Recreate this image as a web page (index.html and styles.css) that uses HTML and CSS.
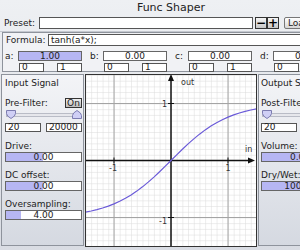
FILE: index.html
```html
<!DOCTYPE html>
<html lang="en">
<head>
    <meta charset="UTF-8">
    <title>Func Shaper</title>
    <link rel="stylesheet" href="styles.css">
</head>
<body>
<div class="app">
    <div class="title">Func Shaper</div>

    <div class="preset-row">
        <span class="preset-label">Preset:</span>
        <div class="preset-input"></div>
        <div class="sq-btn first">&minus;</div>
        <div class="sq-btn">+</div>
        <div class="load-btn">Load</div>
    </div>

    <div class="formula-panel">
        <div class="formula-row">
            <span class="formula-label">Formula:</span>
            <div class="formula-input">tanh(a*x);</div>
        </div>
        <div class="params">
            <div class="param">
                <span class="param-label">a:</span>
                <div class="param-col">
                    <div class="bar" style="--v:100%">1.00</div>
                    <div class="range"><div class="box">0</div><div class="box">1</div></div>
                </div>
            </div>
            <div class="param">
                <span class="param-label">b:</span>
                <div class="param-col">
                    <div class="bar" style="--v:0%">0.00</div>
                    <div class="range"><div class="box">0</div><div class="box">1</div></div>
                </div>
            </div>
            <div class="param">
                <span class="param-label">c:</span>
                <div class="param-col">
                    <div class="bar" style="--v:0%">0.00</div>
                    <div class="range"><div class="box">0</div><div class="box">1</div></div>
                </div>
            </div>
            <div class="param">
                <span class="param-label">d:</span>
                <div class="param-col">
                    <div class="bar" style="--v:0%">0.00</div>
                    <div class="range"><div class="box">0</div><div class="box">1</div></div>
                </div>
            </div>
        </div>
    </div>

    <div class="main">
        <!-- input side -->
        <div class="side">
            <div class="side-title">Input Signal</div>
            <div class="filter-row">
                <span>Pre-Filter:</span>
                <div class="on-btn">On</div>
            </div>
            <svg class="slider" width="77" height="9" viewBox="0 0 77 9">
                <rect x="1.5" y="3.5" width="74" height="3" fill="#e6e7ec" stroke="#b9bcc6"/>
                <path d="M1.5 .5H10.5V3.5Q10.5 6 6 8.5Q1.5 6 1.5 3.5Z" fill="#cfcff5" stroke="#7c7cb0"/>
                <path d="M67.5 8.5V5.5Q67.5 3 72 .5Q76.5 3 76.5 5.5V8.5Z" fill="#cfcff5" stroke="#7c7cb0"/>
            </svg>
            <div class="range2"><div class="box wide">20</div><div class="box wide">20000</div></div>
            <div class="group">
                <div class="group-label">Drive:</div>
                <div class="bar" style="--v:50%">0.00</div>
            </div>
            <div class="group">
                <div class="group-label">DC offset:</div>
                <div class="bar" style="--v:50%">0.00</div>
            </div>
            <div class="group">
                <div class="group-label">Oversampling:</div>
                <div class="bar" style="--v:20%">4.00</div>
            </div>
        </div>

        <!-- transfer curve -->
        <div class="graph">
            <svg width="172" height="173" viewBox="0 0 172 173">
                <defs>
                    <pattern id="minor" x="86" y="86.5" width="5.7" height="5.7" patternUnits="userSpaceOnUse">
                        <path d="M0 0H5.7M0 0V5.7" stroke="#dadada" fill="none"/>
                    </pattern>
                </defs>
                <rect width="172" height="173" fill="#fff"/>
                <rect width="172" height="173" fill="url(#minor)"/>
                <path d="M29 0V173M143 0V173M0 29.5H172M0 143.5H172" stroke="#a4a4a4"/>
                <path d="M86 3V173M0 86.5H166" stroke="#111" stroke-width="1.5"/>
                <path d="M86 0L83 7H89Z M170 86.5L163 83.5V89.5Z" fill="#111"/>
                <path d="M83 29.5H89M83 143.5H89M29 83.5V89.5M143 83.5V89.5" stroke="#111"/>
                <polyline fill="none" stroke="#6a5ad8" stroke-width="1.2"
                    points="0.5,138.09 6.2,136.97 11.9,135.62 17.6,134.02 23.3,132.13 29,129.91 34.7,127.33 40.4,124.35 46.1,120.95 51.8,117.11 57.5,112.84 63.2,108.15 68.9,103.10 74.6,97.75 80.3,92.18 86,86.5 91.7,80.82 97.4,75.25 103.1,69.90 108.8,64.85 114.5,60.16 120.2,55.89 125.9,52.05 131.6,48.65 137.3,45.67 143,43.09 148.7,40.87 154.4,38.98 160.1,37.38 165.8,36.03 171.5,34.91"/>
                <g class="tick">
                    <text x="96" y="11">out</text>
                    <text x="160" y="78">in</text>
                    <text x="82" y="33" text-anchor="end">1</text>
                    <text x="82" y="150" text-anchor="end">-1</text>
                    <text x="28" y="97" text-anchor="middle">-1</text>
                    <text x="143" y="97" text-anchor="middle">1</text>
                </g>
                <rect x=".5" y=".5" width="171" height="172" fill="none" stroke="#333"/>
            </svg>
        </div>

        <!-- output side -->
        <div class="side out">
            <div class="side-title">Output Signal</div>
            <div class="filter-row">
                <span>Post-Filter:</span>
                <div class="on-btn">On</div>
            </div>
            <svg class="slider" width="77" height="9" viewBox="0 0 77 9">
                <rect x="1.5" y="3.5" width="74" height="3" fill="#e6e7ec" stroke="#b9bcc6"/>
                <path d="M1.5 .5H10.5V3.5Q10.5 6 6 8.5Q1.5 6 1.5 3.5Z" fill="#cfcff5" stroke="#7c7cb0"/>
                <path d="M67.5 8.5V5.5Q67.5 3 72 .5Q76.5 3 76.5 5.5V8.5Z" fill="#cfcff5" stroke="#7c7cb0"/>
            </svg>
            <div class="range2"><div class="box wide">20</div><div class="box wide">20000</div></div>
            <div class="group">
                <div class="group-label">Volume:</div>
                <div class="bar" style="--v:100%">0.00</div>
            </div>
            <div class="group">
                <div class="group-label">Dry/Wet:</div>
                <div class="bar" style="--v:100%">100.00</div>
            </div>
        </div>
    </div>
</div>
</body>
</html>
```

FILE: styles.css
```css
* {
    box-sizing: border-box;
}
body {
    margin: 0;
    overflow: hidden;
    background-color: #dcdfe5;
    font-family: "DejaVu Sans", Verdana, sans-serif;
    font-size: 9px;
    color: #222;
}
.app {
    width: 342px;
    height: 250px;
    background: linear-gradient(#eef0f3, #d9dce3);
}
.title {
    height: 15px;
    line-height: 15px;
    text-align: center;
    font-size: 11px;
    color: #222;
}

/* preset row */
.preset-row {
    display: flex;
    align-items: center;
    height: 17px;
    padding-left: 4px;
    border-bottom: 1px solid #c4c8cf;
}
.preset-label {
    width: 35px;
}
.preset-input {
    width: 214px;
    height: 12px;
    border: 1px solid #555;
    background-color: #fff;
}
.sq-btn {
    width: 12px;
    height: 12px;
    border: 1px solid #333;
    background: linear-gradient(#f6f6f6, #c6c6c6);
    display: flex;
    align-items: center;
    justify-content: center;
    font-weight: bold;
    font-size: 12px;
    line-height: 1;
    color: #000;
}
.sq-btn.first {
    margin-left: 2px;
    margin-right: 0;
}
.load-btn {
    margin-left: 5px;
    height: 12px;
    padding: 0 3px;
    border: 1px solid #777;
    border-radius: 2px;
    background: linear-gradient(#fff, #d6d6d6);
    line-height: 10px;
}

/* formula + params */
.formula-panel {
    height: 40px;
    margin-left: 2px;
    padding: 1px 0 1px 2px;
    border: 1px solid #8e939c;
    border-right: none;
    background-color: #f1f2f5;
}
.formula-row {
    display: flex;
    align-items: center;
    height: 12px;
    padding-left: 1px;
}
.formula-label {
    width: 42px;
}
.formula-input {
    flex: 1;
    height: 12px;
    padding-left: 2px;
    border: 1px solid #555;
    background-color: #fff;
    line-height: 10px;
}
.params {
    display: flex;
    margin-top: 5px;
}
.param {
    display: flex;
    flex-shrink: 0;
    width: 85px;
}
.param-label {
    width: 13px;
    line-height: 10px;
}
.param-col {
    width: 64px;
}
.bar {
    height: 10px;
    border: 1px solid #666;
    background: linear-gradient(to right, #b6b6f3 var(--v), #fff var(--v));
    text-align: center;
    line-height: 8px;
    white-space: nowrap;
    overflow: hidden;
}
.range {
    display: flex;
    justify-content: space-between;
    margin-top: 2px;
    padding-left: 1px;
}
.box {
    width: 25px;
    height: 9px;
    padding-left: 2px;
    border: 1px solid #555;
    background-color: #fff;
    line-height: 7px;
}
.box.wide {
    width: 36px;
}

/* main area */
.main {
    display: flex;
    height: 173px;
    margin-top: 2px;
}
.side {
    flex-shrink: 0;
    width: 83px;
    height: 172px;
    margin-left: 1px;
    padding: 3px 1px 0 3px;
    border: 1px solid #8e939c;
    background: linear-gradient(#f3f4f7, #d5d9e1);
}
.side.out {
    padding-left: 2px;
}
.graph {
    flex-shrink: 0;
    width: 172px;
    height: 173px;
    margin-left: 1px;
}
.graph svg {
    display: block;
}
.tick text {
    font-family: "DejaVu Sans", Verdana, sans-serif;
    font-size: 8px;
    fill: #333;
}
.side-title {
    line-height: 11px;
}
.filter-row {
    display: flex;
    justify-content: space-between;
    align-items: center;
    height: 10px;
    margin-top: 9px;
}
.on-btn {
    width: 17px;
    height: 10px;
    border: 1px solid #333;
    background: linear-gradient(#eee, #bbb);
    text-align: center;
    line-height: 8px;
}
.slider {
    display: block;
    margin-top: 2px;
}
.range2 {
    display: flex;
    justify-content: space-between;
    margin-top: 4px;
}
.group {
    margin-top: 9px;
}
.group + .group {
    margin-top: 8px;
}
.group-label {
    line-height: 11px;
}
```
